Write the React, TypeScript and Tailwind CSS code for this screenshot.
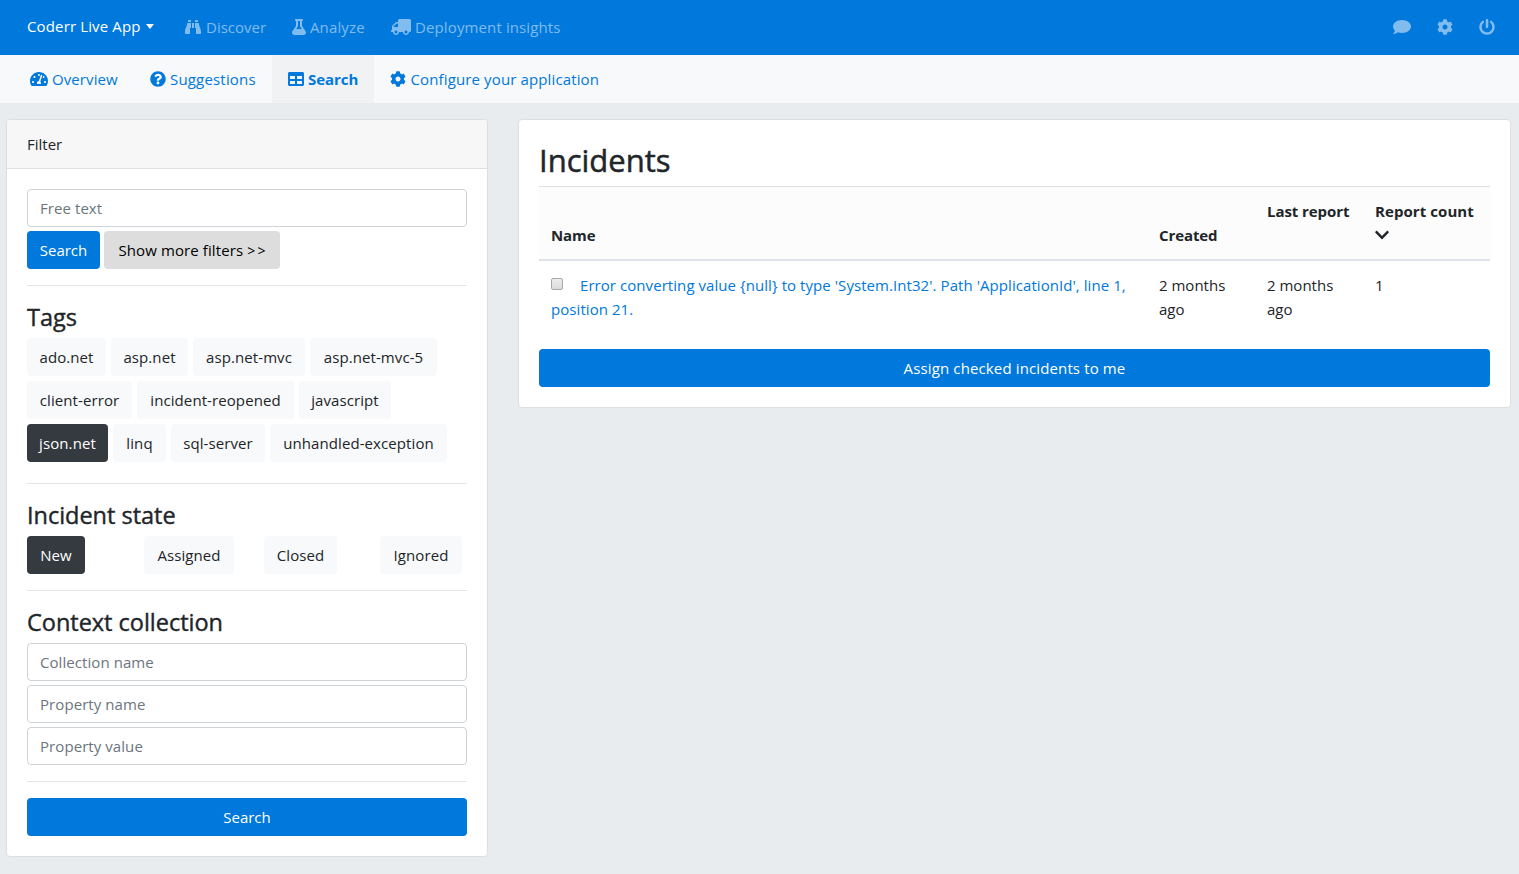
import type { ReactNode } from "react";
import {
  FaBinoculars,
  FaChevronDown,
  FaCog,
  FaFlask,
  FaPowerOff,
  FaQuestionCircle,
  FaTable,
  FaTachometerAlt,
  FaTruck,
} from "react-icons/fa";

const tagRows = [
  [
    { name: "ado.net", width: "w-[79px]" },
    { name: "asp.net", width: "w-[77px]" },
    { name: "asp.net-mvc", width: "w-[112px]" },
    { name: "asp.net-mvc-5", width: "w-[127px]" },
  ],
  [
    { name: "client-error", width: "w-[105px]" },
    { name: "incident-reopened", width: "w-[157px]" },
    { name: "javascript", width: "w-[92px]" },
  ],
  [
    { name: "json.net", width: "w-[81px]", active: true },
    { name: "linq", width: "w-[53px]" },
    { name: "sql-server", width: "w-[94px]" },
    { name: "unhandled-exception", width: "w-[177px]" },
  ],
];

function CommentIcon() {
  return (
    <svg viewBox="0 0 576 512" className="h-4 w-[18px]" fill="currentColor">
      <path d="M576 240c0 115-129 208-288 208-48.3 0-93.9-8.6-133.9-23.8-40.3 31.2-89.8 50.3-142.4 55.7-5.2.6-10.2-2.8-11.5-7.7-1.3-5 2.7-8.1 6.6-11.8 19.3-18.4 42.7-32.8 51.9-94.6C21.9 330.9 0 287.3 0 240 0 125.1 129 32 288 32s288 93.1 288 208z" />
    </svg>
  );
}

function Chip({ width, active, children }: { width: string; active?: boolean; children: ReactNode }) {
  return (
    <button
      className={`flex h-[38px] shrink-0 items-center justify-center rounded tracking-[0.09px] whitespace-nowrap ${width} ${
        active ? "bg-[#343a40] text-white" : "bg-[#f8f9fa] text-[#212529]"
      }`}
    >
      {children}
    </button>
  );
}

function Field({ placeholder }: { placeholder: string }) {
  return (
    <input
      placeholder={placeholder}
      className="block h-[38px] w-full rounded border border-[#ced4da] bg-white px-3 tracking-[0.07px] placeholder:text-[#6c757d] placeholder:opacity-100"
    />
  );
}

function Heading({ children }: { children: ReactNode }) {
  return (
    <h4 className="h-9 text-[23.5px] leading-[31px] font-medium tracking-[-0.02px] [-webkit-text-stroke:0.4px_#212529]">
      {children}
    </h4>
  );
}

function Rule() {
  return <hr className="my-4 border-t border-[#e5e5e5]" />;
}

export default function App() {
  return (
    <div className="h-[874px] w-full overflow-hidden bg-[#e9ecef] font-['Open_Sans',sans-serif] text-[15px] leading-6 text-[#212529]">
      <header className="flex h-[55px] items-center bg-[#0078dc] pb-px pl-[27px] text-white/50">
        <div className="flex w-[158px] items-center pb-[2px] whitespace-nowrap text-white">
          <span className="tracking-[0.14px]">Coderr Live App</span>
          <span className="ml-[5px] border-x-[4.5px] border-t-[5px] border-x-transparent border-t-white" />
        </div>
        <a className="flex w-[107px] items-center gap-[5px]">
          <FaBinoculars className="size-4" />
          <span>Discover</span>
        </a>
        <a className="flex w-[99px] items-center gap-1">
          <FaFlask className="h-4 w-[14px]" />
          <span className="tracking-[0.14px]">Analyze</span>
        </a>
        <a className="flex items-center gap-1 whitespace-nowrap">
          <FaTruck className="h-4 w-5 -scale-x-100" />
          <span className="tracking-[0.12px]">Deployment insights</span>
        </a>
        <div className="ml-auto flex items-center pr-6">
          <div className="w-11"><CommentIcon /></div>
          <div className="w-[42px]"><FaCog className="size-4" /></div>
          <FaPowerOff className="size-4" />
        </div>
      </header>

      <nav className="flex h-12 items-stretch bg-[#f8f9fa] pl-[14px] whitespace-nowrap text-[#0078dc]">
        <a className="flex w-[120px] items-center gap-1 px-4">
          <FaTachometerAlt className="h-4 w-[18px] shrink-0" />
          <span className="tracking-[0.09px]">Overview</span>
        </a>
        <a className="flex w-[138px] items-center gap-1 px-4">
          <FaQuestionCircle className="size-4 shrink-0" />
          <span className="tracking-[0.18px]">Suggestions</span>
        </a>
        <a className="flex w-[102px] items-center gap-1 bg-[#f0f2f3] px-4 font-bold">
          <FaTable className="size-4 shrink-0" />
          <span className="tracking-[-0.05px]">Search</span>
        </a>
        <a className="flex items-center gap-[4.5px] px-4">
          <FaCog className="size-4 shrink-0" />
          <span className="tracking-[0.13px]">Configure your application</span>
        </a>
      </nav>

      <main className="flex items-start gap-[30px] pt-4 pl-[6px]">
        <section className="w-[482px] shrink-0 overflow-hidden rounded border border-[#dcdfe1] bg-white">
          <div className="h-[49px] border-b border-[#dfdfdf] bg-[#f7f7f7] px-5 py-3">Filter</div>
          <div className="p-5">
            <Field placeholder="Free text" />
            <div className="mt-1 flex gap-1">
              <button className="h-[38px] w-[73px] rounded bg-[#0078dc] text-white">Search</button>
              <button className="h-[38px] w-[176px] rounded bg-[#ddd] tracking-[0.1px] whitespace-nowrap text-black">
                Show more filters <span className="text-[14px] tracking-[2.2px]">&gt;</span>
                <span className="text-[14px]">&gt;</span>
              </button>
            </div>
            <Rule />
            <Heading>Tags</Heading>
            <div className="flex flex-col gap-[5px] pb-[5px]">
              {tagRows.map((row) => (
                <div key={row[0].name} className="flex gap-[5px]">
                  {row.map((tag) => (
                    <Chip key={tag.name} width={tag.width} active={tag.active}>
                      {tag.name}
                    </Chip>
                  ))}
                </div>
              ))}
            </div>
            <Rule />
            <Heading>Incident state</Heading>
            <div className="grid grid-cols-[117px_120px_116px_82px]">
              <Chip width="w-[58px]" active>New</Chip>
              <Chip width="w-[90px]">Assigned</Chip>
              <Chip width="w-[73px]">Closed</Chip>
              <Chip width="w-[82px]">Ignored</Chip>
            </div>
            <Rule />
            <Heading>Context collection</Heading>
            <div className="flex flex-col gap-1">
              <Field placeholder="Collection name" />
              <Field placeholder="Property name" />
              <Field placeholder="Property value" />
            </div>
            <Rule />
            <button className="block h-[38px] w-full rounded bg-[#0078dc] text-white">Search</button>
          </div>
        </section>

        <section className="w-[993px] shrink-0 rounded border border-[#dcdfe1] bg-white p-5">
          <h2 className="h-[46px] text-[31px] leading-[40px] font-medium [-webkit-text-stroke:0.5px_#212529]">
            Incidents
          </h2>
          <table className="w-full table-fixed border-collapse text-left">
            <colgroup>
              <col />
              <col className="w-[108px]" />
              <col className="w-[108px]" />
              <col className="w-[127px]" />
            </colgroup>
            <thead>
              <tr className="h-[73px] border-t border-b-2 border-t-[#dee2e6] border-b-[#dee2e6] bg-[#fcfcfc]">
                <th className="px-3 pb-3 align-bottom tracking-[-0.1px]">Name</th>
                <th className="px-3 pb-3 align-bottom tracking-[-0.1px]">Created</th>
                <th className="px-3 pt-3 align-top tracking-[-0.07px] whitespace-nowrap">Last report</th>
                <th className="px-3 pt-3 align-top tracking-[0.07px] whitespace-nowrap">
                  Report count
                  <FaChevronDown className="mt-1 h-4 w-[14px]" />
                </th>
              </tr>
            </thead>
            <tbody>
              <tr className="align-top">
                <td className="p-3 tracking-[0.063px] whitespace-nowrap text-[#0078dc]">
                  <span className="mr-[17px] inline-block size-3 rounded-[2px] border border-[#a8a8a8] bg-linear-to-b from-[#ececec] to-[#dcdcdc] align-[1px]" />
                  Error converting value {"{null}"} to type 'System.Int32'. Path 'ApplicationId', line 1,
                  <br />
                  position 21.
                </td>
                <td className="p-3">2 months<br />ago</td>
                <td className="p-3">2 months<br />ago</td>
                <td className="p-3">1</td>
              </tr>
            </tbody>
          </table>
          <button className="mt-4 block h-[38px] w-full rounded bg-[#0078dc] tracking-[0.13px] text-white">
            Assign checked incidents to me
          </button>
        </section>
      </main>
    </div>
  );
}
